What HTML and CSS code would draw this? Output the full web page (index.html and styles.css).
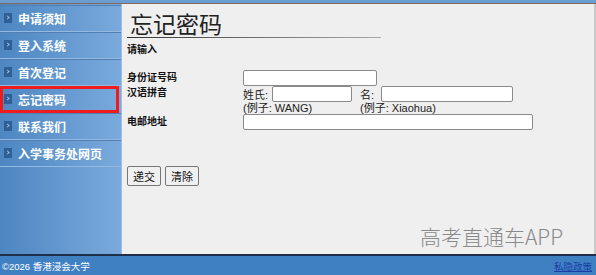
FILE: index.html
```html
<!DOCTYPE html>
<html lang="zh">
<head>
    <meta charset="UTF-8">
    <title>忘记密码</title>
    <link rel="stylesheet" href="styles.css">
</head>
<body>
    <div class="top-strip"></div>
    <div class="main">
        <ul class="side-nav">
            <li class="side-nav__item"><span class="bullet"></span>申请须知</li>
            <li class="side-nav__item"><span class="bullet"></span>登入系统</li>
            <li class="side-nav__item"><span class="bullet"></span>首次登记</li>
            <li class="side-nav__item side-nav__item--active"><span class="bullet"></span>忘记密码</li>
            <li class="side-nav__item"><span class="bullet"></span>联系我们</li>
            <li class="side-nav__item"><span class="bullet"></span>入学事务处网页</li>
        </ul>

        <div class="content">
            <h1 class="page-title">忘记密码</h1>
            <div class="intro">请输入</div>

            <form class="reset-form">
                <label class="form__label">身份证号码</label>
                <div class="form__field"><input type="text" class="form__input form__input--id"></div>

                <label class="form__label">汉语拼音</label>
                <div class="form__field pinyin">
                    <div class="pinyin__part">
                        <span>姓氏:</span><input type="text" class="form__input form__input--surname">
                        <div class="example">(例子: WANG)</div>
                    </div>
                    <div class="pinyin__part">
                        <span>名:</span><input type="text" class="form__input form__input--given">
                        <div class="example">(例子: Xiaohua)</div>
                    </div>
                </div>

                <label class="form__label">电邮地址</label>
                <div class="form__field"><input type="text" class="form__input form__input--email"></div>
            </form>

            <div class="buttons">
                <button type="button" class="form__button">递交</button>
                <button type="button" class="form__button">清除</button>
            </div>

            <div class="watermark">高考直通车APP</div>
        </div>
    </div>
    <footer class="footer">
        <span>©2026 香港浸会大学</span>
        <a href="#" class="footer__link">私隐政策</a>
    </footer>
</body>
</html>
```

FILE: styles.css
```css
*, *::after, *::before {
    margin: 0;
    padding: 0;
    box-sizing: border-box;
}

body {
    width: 596px;
    height: 275px;
    display: flex;
    flex-direction: column;
    font-family: "Liberation Sans", "Noto Sans CJK SC", sans-serif;
    font-size: 11px;
    background-color: #efefef;
    color: #111;
    overflow: hidden;
}

.top-strip {
    height: 4px;
    background-color: #6c9dd0;
    border-bottom: 1px solid #7d6a5c;
}

.main {
    flex: 1;
    display: flex;
    border-right: 2px solid #c8c8c8;
}

/* Sidebar */
.side-nav {
    width: 122px;
    list-style: none;
    padding-top: 1px;
    background: linear-gradient(to right, #4d86c1, #7aaadd);
    border-right: 1px solid #9cbfe3;
}

.side-nav__item {
    display: flex;
    align-items: center;
    height: 27px;
    padding-left: 4px;
    font-family: "Noto Sans CJK SC", sans-serif;
    font-size: 12px;
    font-weight: 700;
    color: #fff;
    border-bottom: 1px solid #94b9e0;
    box-shadow: 0 1px 0 #4f7fb4 inset;
}

.side-nav__item--active {
    outline: 3px solid #ee1c1c;
    outline-offset: -3px;
    margin: 0 2px 0 0;
}

.bullet {
    width: 8px;
    height: 10px;
    margin-right: 6px;
    background-color: #2e5f96;
    position: relative;
}

.bullet::after {
    content: "";
    position: absolute;
    left: 2px;
    top: 3px;
    width: 3px;
    height: 3px;
    border-top: 1px solid #9cc0e6;
    border-right: 1px solid #9cc0e6;
    transform: rotate(45deg);
}

/* Content */
.content {
    flex: 1;
    position: relative;
    padding-left: 5px;
}

.page-title {
    display: inline-block;
    width: 254px;
    padding: 5px 0 0 3px;
    font-family: "Noto Sans CJK SC", sans-serif;
    font-size: 23px;
    font-weight: 400;
    line-height: 28px;
    color: #222;
    border-bottom: 1px solid;
    border-image: linear-gradient(to right, #333, #aaa) 1;
}

.intro {
    margin-top: 3px;
    font-weight: 700;
    font-size: 10px;
}

.reset-form {
    display: grid;
    grid-template-columns: 116px 1fr;
    align-items: start;
    margin-top: 14px;
}

.form__label {
    font-weight: 700;
    font-size: 10px;
    line-height: 16px;
}

.form__label:nth-of-type(2) {
    line-height: 14px;
}

.form__input {
    height: 16px;
    border: 1px solid #8a8a8a;
    border-radius: 2px;
    background-color: #fff;
    outline: none;
}

.form__input--id { width: 134px; }
.form__input--surname { width: 80px; margin-left: 4px; }
.form__input--given { width: 132px; margin-left: 7px; }
.form__input--email { width: 290px; }

.pinyin {
    display: flex;
    gap: 8px;
    font-size: 11px;
    color: #222;
}

.pinyin__part span {
    vertical-align: middle;
}

.pinyin__part input {
    vertical-align: middle;
}

.example {
    line-height: 12px;
    font-size: 11px;
}

.buttons {
    display: flex;
    gap: 4px;
    margin-top: 36px;
}

.form__button {
    height: 20px;
    padding: 0 5px;
    font-family: "Noto Sans CJK SC", sans-serif;
    font-size: 11px;
    color: #111;
    background-color: #f0f0f0;
    border: 1px solid #777;
    border-radius: 2px;
}

.watermark {
    position: absolute;
    left: 298px;
    top: 217px;
    font-family: "Noto Sans CJK SC", sans-serif;
    font-size: 21px;
    font-weight: 300;
    color: #8a8a8a;
}

/* Footer */
.footer {
    height: 21px;
    display: flex;
    justify-content: space-between;
    align-items: center;
    padding: 0 4px 0 2px;
    background-color: #3f80c3;
    border-top: 2px solid #1f2f4a;
    color: #fff;
    font-size: 9.5px;
}

.footer__link {
    color: #1a3da6;
}
```
